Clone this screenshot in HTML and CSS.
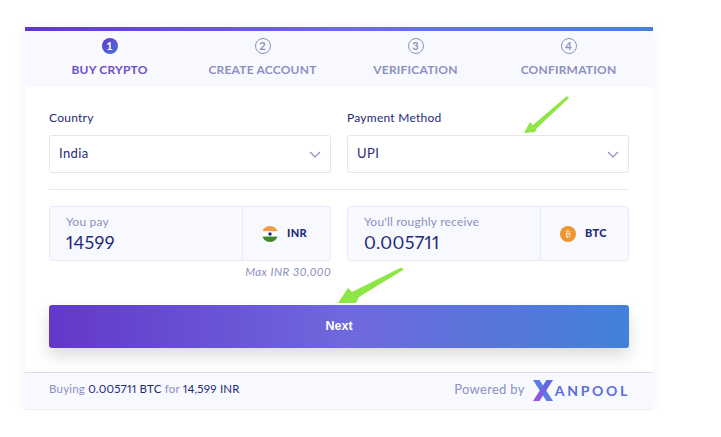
FILE: index.html
```html
<!DOCTYPE html>
<html>
  <head>
    <title>Buy Crypto</title>
    <meta charset="utf-8" />
    <link rel="stylesheet" href="styles.css">
  </head>
  <body>
    <div class="card">
      <div class="topbar"></div>
      <div class="steps">
        <div class="step active">
          <span class="num">1</span>
          <span class="name">BUY CRYPTO</span>
        </div>
        <div class="step">
          <span class="num">2</span>
          <span class="name">CREATE ACCOUNT</span>
        </div>
        <div class="step">
          <span class="num">3</span>
          <span class="name">VERIFICATION</span>
        </div>
        <div class="step">
          <span class="num">4</span>
          <span class="name">CONFIRMATION</span>
        </div>
      </div>

      <div class="form">
        <div class="row">
          <div class="field">
            <label class="label">Country</label>
            <div class="select">
              <span>India</span>
              <svg class="chev" width="12" height="7" viewBox="0 0 12 7"><path d="M1 1l5 5 5-5" fill="none" stroke="#8b8fc0" stroke-width="1.2"/></svg>
            </div>
          </div>
          <div class="field">
            <label class="label">Payment Method</label>
            <div class="select">
              <span>UPI</span>
              <svg class="chev" width="12" height="7" viewBox="0 0 12 7"><path d="M1 1l5 5 5-5" fill="none" stroke="#8b8fc0" stroke-width="1.2"/></svg>
            </div>
          </div>
        </div>

        <div class="divider"></div>

        <div class="row">
          <div class="field">
            <div class="amount">
              <div class="value">
                <span class="hint">You pay</span>
                <span class="big">14599</span>
              </div>
              <div class="currency">
                <svg width="16" height="16" viewBox="0 0 16 16">
                  <clipPath id="flag"><circle cx="8" cy="8" r="8"/></clipPath>
                  <g clip-path="url(#flag)">
                    <rect width="16" height="5.4" fill="#f59c45"/>
                    <rect y="5.4" width="16" height="5.2" fill="#fff"/>
                    <rect y="10.6" width="16" height="5.4" fill="#3d8a2a"/>
                    <circle cx="8" cy="8" r="1.7" fill="#1e2a78"/>
                  </g>
                </svg>
                <span class="code">INR</span>
              </div>
            </div>
            <div class="max">Max INR 30,000</div>
          </div>
          <div class="field">
            <div class="amount">
              <div class="value">
                <span class="hint">You'll roughly receive</span>
                <span class="big">0.005711</span>
              </div>
              <div class="currency">
                <svg width="16" height="16" viewBox="0 0 16 16">
                  <circle cx="8" cy="8" r="8" fill="#ec9631"/>
                  <path d="M6.6 4.8v6.4M6.6 5h2.2c1.500 0 1.500 2.800 0 2.800H6.600M6.600 7.900h2.500c1.700 0 1.700 3 0 3H6.600M7.500 3.900v1M7.500 11v1" fill="none" stroke="#fbe3c4" stroke-width="1"/>
                </svg>
                <span class="code">BTC</span>
              </div>
            </div>
          </div>
        </div>

        <button class="next">Next</button>
      </div>

      <div class="footer">
        <div class="summary">Buying <b>0.005711 BTC</b> for <b>14,599 INR</b></div>
        <div class="powered">
          <span>Powered by</span>
          <svg width="20" height="21" viewBox="0 0 20 21">
            <defs>
              <linearGradient id="xan-a" x1="0" y1="1" x2="1" y2="0">
                <stop offset="0" stop-color="#a04fe2"/>
                <stop offset="1" stop-color="#4f72e0"/>
              </linearGradient>
            </defs>
            <path d="M0 0h6.500L20 21h-6.500z" fill="#5a7ce4"/>
            <path d="M13.500 0H20L6.500 21H0z" fill="url(#xan-a)"/>
          </svg>
          <span class="brand">ANPOOL</span>
        </div>
      </div>

      <svg class="arrow arrow-top" width="48" height="40" viewBox="0 0 48 40">
        <path d="M1 37L7 26l3 3L44 0l2 2-32 30-2 4z" fill="#8ee645"/>
      </svg>
      <svg class="arrow arrow-bottom" width="68" height="38" viewBox="0 0 68 38">
        <path d="M0 36L10 21l4 4L62 1c2-1 4 1 3 2L21 30l-3 6z" fill="#8ee645"/>
      </svg>
    </div>
  </body>
</html>
```

FILE: styles.css
```css
html,
body {
  margin: 0;
  padding: 0;
  background: #fff;
  font-family: Lato, "Open Sans", sans-serif;
  color: #1f2a78;
}
body {
  padding: 27px 0 0 25px;
}
.card {
  position: relative;
  width: 628px;
  background: #fff;
  box-shadow: 0 0 14px rgba(30, 30, 80, 0.05);
}
.topbar {
  height: 4px;
  background: linear-gradient(to right, #6238c8, #6f69de 50%, #4282d9);
}
.steps {
  display: grid;
  grid-template-columns: repeat(4, 153px);
  height: 56px;
  padding: 0 8px;
  background: #f8f9ff;
}
.step {
  display: flex;
  flex-direction: column;
  align-items: center;
  padding-top: 7px;
  color: #8c90bf;
}
.num {
  box-sizing: border-box;
  width: 16px;
  height: 16px;
  border: 1px solid #8c90bf;
  border-radius: 50%;
  font-size: 11px;
  font-weight: 700;
  line-height: 14px;
  text-align: center;
}
.name {
  margin-top: 8px;
  font-size: 12px;
  font-weight: 700;
  letter-spacing: 0.2px;
  line-height: 15px;
  white-space: nowrap;
}
.step.active {
  color: #6f4fc9;
}
.step.active .num {
  border: 0;
  color: #fff;
  line-height: 16px;
  background: linear-gradient(135deg, #6238c8, #4a72dc);
}
.form {
  padding: 24px 24px 0;
}
.row {
  display: grid;
  grid-template-columns: 282px 282px;
  gap: 16px;
}
.label {
  display: block;
  height: 14px;
  margin-bottom: 10px;
  font-size: 12px;
  line-height: 14px;
  letter-spacing: 0.25px;
}
.select {
  box-sizing: border-box;
  display: flex;
  align-items: center;
  justify-content: space-between;
  height: 38px;
  padding: 0 9px;
  border: 1px solid #e4e4ea;
  border-radius: 3px;
  font-size: 13px;
  letter-spacing: 0.4px;
}
.select span {
  margin-bottom: 2px;
}
.divider {
  height: 1px;
  margin: 16px 0;
  background: #e6e6ec;
}
.amount {
  box-sizing: border-box;
  display: flex;
  height: 55px;
  border: 1px solid #e8e9fb;
  border-radius: 3px;
  background: #f8f9ff;
}
.value {
  display: flex;
  flex: 1;
  flex-direction: column;
  padding: 8px 0 0 16px;
}
.hint {
  font-size: 12px;
  line-height: 14px;
  color: #8c90bf;
  letter-spacing: 0.2px;
}
.big {
  margin-top: 3px;
  font-size: 18px;
  font-variant-numeric: proportional-nums;
  line-height: 20px;
  letter-spacing: 0.3px;
}
.currency {
  display: flex;
  align-items: center;
  gap: 9px;
  width: 88px;
  box-sizing: border-box;
  padding: 0 0 0 19px;
  border-left: 1px solid #e8e9fb;
}
.code {
  margin-top: -3px;
  font-size: 11px;
  font-weight: 900;
  letter-spacing: 0.3px;
}
.max {
  margin-top: 4px;
  font-size: 11.500px;
  font-style: italic;
  line-height: 14px;
  text-align: right;
  color: #8c90bf;
  letter-spacing: 0.4px;
}
.next {
  display: block;
  width: 100%;
  height: 43px;
  margin: 26px 0 24px;
  padding: 0 0 2px;
  border: 0;
  border-radius: 3px;
  font: 700 12.500px "Liberation Sans", sans-serif;
  color: #fff;
  background: linear-gradient(to right, #6238c8, #6f69de 52%, #4282d9);
  box-shadow: 0 8px 16px rgba(0, 0, 0, 0.14);
}
.footer {
  box-sizing: border-box;
  display: flex;
  align-items: center;
  justify-content: space-between;
  height: 38px;
  padding: 0 24px;
  border-top: 1px solid #dcdcf0;
  border-bottom: 1px solid #eeeef6;
  background: #f8f9ff;
}
.summary {
  margin-bottom: 5px;
  font-size: 11.500px;
  font-variant-numeric: proportional-nums;
  color: #8c90bf;
  letter-spacing: 0.2px;
}
.summary b {
  font-weight: 400;
  color: #1f2a78;
}
.powered {
  display: flex;
  align-items: center;
  gap: 8px;
  margin-right: -1px;
  margin-bottom: 1px;
  font-size: 13px;
  color: #8c90bf;
  letter-spacing: 0.3px;
}
.powered span:first-child {
  margin-bottom: 3px;
}
.brand {
  margin-left: -6px;
  font-size: 14px;
  font-weight: 700;
  letter-spacing: 2.700px;
  color: #5a6ce0;
}
.arrow {
  position: absolute;
}
.arrow-top {
  left: 498px;
  top: 69px;
}
.arrow-bottom {
  left: 313px;
  top: 240px;
}
```
